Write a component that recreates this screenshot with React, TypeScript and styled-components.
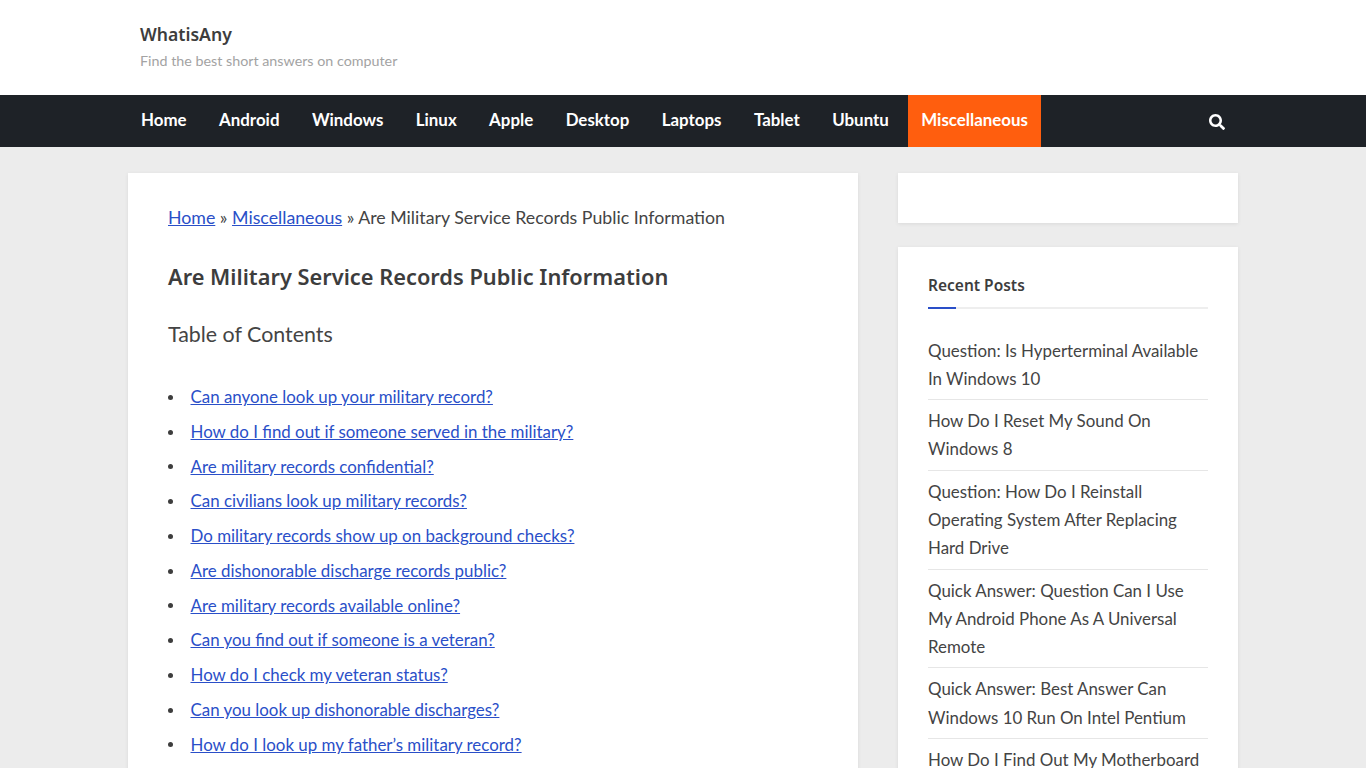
import React from 'react';
import styled, { createGlobalStyle } from 'styled-components';
import { FaSearch } from 'react-icons/fa';

const bodyFont = `'Lato', 'Open Sans', sans-serif`;
const headFont = `'Noto Sans', 'Open Sans', sans-serif`;

const navItems = ['Home', 'Android', 'Windows', 'Linux', 'Apple', 'Desktop', 'Laptops', 'Tablet', 'Ubuntu', 'Miscellaneous'];

const tocItems = [
  'Can anyone look up your military record?',
  'How do I find out if someone served in the military?',
  'Are military records confidential?',
  'Can civilians look up military records?',
  'Do military records show up on background checks?',
  'Are dishonorable discharge records public?',
  'Are military records available online?',
  'Can you find out if someone is a veteran?',
  'How do I check my veteran status?',
  'Can you look up dishonorable discharges?',
  'How do I look up my father’s military record?',
];

const recentPosts = [
  'Question: Is Hyperterminal Available In Windows 10',
  'How Do I Reset My Sound On Windows 8',
  'Question: How Do I Reinstall Operating System After Replacing Hard Drive',
  'Quick Answer: Question Can I Use My Android Phone As A Universal Remote',
  'Quick Answer: Best Answer Can Windows 10 Run On Intel Pentium',
  'How Do I Find Out My Motherboard',
];

const GlobalStyle = createGlobalStyle`
  html, body {
    margin: 0;
    padding: 0;
    background: #ececec;
  }
  #root {
    height: 768px;
    overflow: hidden;
  }
`;

const Page = styled.div`
  font-family: ${bodyFont};
  color: #444;
`;

const Container = styled.div`
  width: 1110px;
  margin: 0 auto;
`;

const Header = styled.header`
  background: #fff;
  height: 95px;
  box-sizing: border-box;
  padding-top: 22px;
`;

const Brand = styled.div`
  padding-left: 12px;
`;

const SiteTitle = styled.div`
  font-family: ${headFont};
  font-weight: 600;
  font-size: 17.6px;
  line-height: 25px;
  color: #3d3d3d;
`;

const Tagline = styled.div`
  font-size: 14.3px;
  line-height: 20px;
  margin-top: 4px;
  color: #a3a3a3;
`;

const NavBar = styled.nav`
  background: #1e2227;
  height: 52px;
`;

const NavInner = styled(Container)`
  display: flex;
  align-items: stretch;
  height: 100%;
`;

const NavList = styled.div`
  display: flex;
  gap: 6.4px;
  flex: 1;
`;

const NavLink = styled.a<{ $active?: boolean }>`
  display: flex;
  align-items: center;
  padding: 0 13px 3px;
  font-size: 16.9px;
  font-weight: 700;
  color: #fff;
  background: ${(p) => (p.$active ? '#ff5e0e' : 'transparent')};
`;

const SearchButton = styled.button`
  display: flex;
  align-items: center;
  background: none;
  border: 0;
  padding: 2px 13px 0;
  color: #fff;
`;

const Layout = styled(Container)`
  display: grid;
  grid-template-columns: 730px 340px;
  gap: 40px;
  padding-top: 26px;
`;

const Card = styled.div`
  background: #fff;
  box-shadow: 0 1px 4px rgba(0, 0, 0, 0.08);
`;

const MainCard = styled(Card)`
  padding: 32px 40px;
`;

const Breadcrumb = styled.div`
  font-size: 17.75px;
  line-height: 25px;
`;

const BlueLink = styled.a`
  color: #2a4fc8;
  text-decoration: underline;
`;

const Title = styled.h1`
  font-family: ${headFont};
  font-weight: 600;
  font-size: 21.8px;
  line-height: 32px;
  color: #3d3d3d;
  margin: 31px 0 0;
`;

const TocHeading = styled.h2`
  font-weight: 400;
  font-size: 21.4px;
  line-height: 30px;
  color: #444;
  margin: 26px 0 0;
`;

const TocList = styled.ul`
  list-style: none;
  margin: 36px 0 0;
  padding: 0;
`;

const TocItem = styled.li`
  display: flex;
  align-items: center;
  gap: 17.5px;
  font-size: 16.9px;
  line-height: 24.75px;
  margin-bottom: 10px;
  &::before {
    content: '';
    width: 5px;
    height: 5px;
    border-radius: 50%;
    background: #3d3d3d;
  }
`;

const Sidebar = styled.aside`
  display: flex;
  flex-direction: column;
  gap: 24px;
`;

const EmptyCard = styled(Card)`
  height: 50px;
`;

const WidgetCard = styled(Card)`
  padding: 24px 30px;
`;

const WidgetTitle = styled.h3`
  position: relative;
  font-family: ${headFont};
  font-weight: 600;
  font-size: 15.5px;
  line-height: 28px;
  color: #3d3d3d;
  margin: 0;
  padding-bottom: 8px;
  border-bottom: 2px solid #eee;
  &::after {
    content: '';
    position: absolute;
    left: 0;
    bottom: -2px;
    width: 28px;
    height: 2px;
    background: #2a4fc8;
  }
`;

const PostList = styled.div`
  margin-top: 27.5px;
`;

const PostRow = styled.a`
  display: block;
  font-size: 16.9px;
  line-height: 28.3px;
  padding-bottom: 6px;
  margin-bottom: 7px;
  border-bottom: 1px solid #e6e6e6;
  color: #444;
`;

export default function App() {
  return (
    <Page>
      <GlobalStyle />
      <Header>
        <Container>
          <Brand>
            <SiteTitle>WhatisAny</SiteTitle>
            <Tagline>Find the best short answers on computer</Tagline>
          </Brand>
        </Container>
      </Header>
      <NavBar>
        <NavInner>
          <NavList>
            {navItems.map((item) => (
              <NavLink key={item} $active={item === 'Miscellaneous'}>{item}</NavLink>
            ))}
          </NavList>
          <SearchButton aria-label="Search">
            <FaSearch size={16} />
          </SearchButton>
        </NavInner>
      </NavBar>
      <Layout>
        <MainCard>
          <Breadcrumb>
            <BlueLink>Home</BlueLink> » <BlueLink>Miscellaneous</BlueLink> » Are Military Service Records Public Information
          </Breadcrumb>
          <Title>Are Military Service Records Public Information</Title>
          <TocHeading>Table of Contents</TocHeading>
          <TocList>
            {tocItems.map((item) => (
              <TocItem key={item}><BlueLink>{item}</BlueLink></TocItem>
            ))}
          </TocList>
        </MainCard>
        <Sidebar>
          <EmptyCard />
          <WidgetCard>
            <WidgetTitle>Recent Posts</WidgetTitle>
            <PostList>
              {recentPosts.map((post) => (
                <PostRow key={post}>{post}</PostRow>
              ))}
            </PostList>
          </WidgetCard>
        </Sidebar>
      </Layout>
    </Page>
  );
}
